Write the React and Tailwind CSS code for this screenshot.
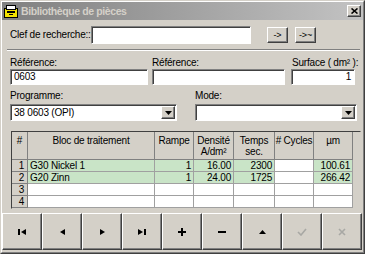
import React from 'react';

const font = "font-['Liberation_Sans',Arial,sans-serif] text-[10px] tracking-[-0.2px] leading-[12px] text-black whitespace-nowrap";
const raised = "border border-t-white border-l-white border-r-[#404040] border-b-[#404040] shadow-[inset_-1px_-1px_#808080]";
const sunken = "border border-t-[#808080] border-l-[#808080] border-r-white border-b-white shadow-[inset_1px_1px_#404040] bg-white";

function TextBox({ w, value, right, h = 'h-[16px]' }) {
  return (
    <div className={`${sunken} ${w} ${h} flex items-center px-[3px] ${right ? 'justify-end' : ''}`}>
      {value}
    </div>
  );
}

function Select({ w, value }) {
  return (
    <div className={`${sunken} ${w} h-[17px] flex items-center justify-between pl-[3px] pr-[1px]`}>
      <span>{value}</span>
      <div className={`${raised} bg-[#d4d0c8] w-[14px] h-[13px] flex items-center justify-center`}>
        <svg width="7" height="4" viewBox="0 0 7 4"><path d="M0 0h7L3.5 4z" fill="#000" /></svg>
      </div>
    </div>
  );
}

const cols = "grid grid-cols-[16px_127px_39px_40px_41px_39px_39px]";

const rows = [
  { n: '1', bloc: 'G30 Nickel 1', rampe: '1', dens: '16.00', temps: '2300', um: '100.61', on: true },
  { n: '2', bloc: 'G20 Zinn', rampe: '1', dens: '24.00', temps: '1725', um: '266.42', on: true },
  { n: '3' },
  { n: '4' },
];

function Cell({ children, green, right }) {
  return (
    <div className={`h-[12px] border-r border-b border-[#a0a0a0] px-[2px] flex items-center ${right ? 'justify-end' : ''} ${green ? 'bg-[#c9e4c7]' : 'bg-white'}`}>
      {children}
    </div>
  );
}

function NavIcon({ kind }) {
  const f = '#000';
  const g = '#a8a8a4';
  switch (kind) {
    case 'first':
      return <svg width="8" height="6" viewBox="0 0 8 6"><rect x="0" y="0" width="2" height="6" fill={f} /><path d="M8 0v6L3 3z" fill={f} /></svg>;
    case 'prev':
      return <svg width="5" height="6" viewBox="0 0 5 6"><path d="M5 0v6L0 3z" fill={f} /></svg>;
    case 'next':
      return <svg width="5" height="6" viewBox="0 0 5 6"><path d="M0 0v6l5-3z" fill={f} /></svg>;
    case 'last':
      return <svg width="8" height="6" viewBox="0 0 8 6"><path d="M0 0v6l5-3z" fill={f} /><rect x="6" y="0" width="2" height="6" fill={f} /></svg>;
    case 'add':
      return <svg width="8" height="8" viewBox="0 0 8 8"><rect x="3" y="0" width="2" height="8" fill={f} /><rect x="0" y="3" width="8" height="2" fill={f} /></svg>;
    case 'del':
      return <svg width="8" height="2" viewBox="0 0 8 2"><rect width="8" height="2" fill={f} /></svg>;
    case 'up':
      return <svg width="7" height="4" viewBox="0 0 7 4"><path d="M0 4h7L3.5 0z" fill={f} /></svg>;
    case 'ok':
      return <svg width="10" height="8" viewBox="0 0 10 8"><path d="M1 4l3 3 5-6" stroke={g} strokeWidth="1.6" fill="none" /></svg>;
    default:
      return <svg width="8" height="8" viewBox="0 0 8 8"><path d="M1 1l6 6M7 1L1 7" stroke={g} strokeWidth="1.6" fill="none" /></svg>;
  }
}

export default function App() {
  return (
    <div className={`${font} w-[365px] h-[254px] bg-[#d4d0c8] border border-t-[#d4d0c8] border-l-[#d4d0c8] border-r-[#404040] border-b-[#404040]`}>
      <div className="h-full border border-t-white border-l-white border-r-[#808080] border-b-[#808080] flex flex-col">
        {/* title bar */}
        <div className="h-[18px] bg-gradient-to-r from-[#808080] to-[#c3c3c3] flex items-center pl-[2px] pr-[2px]">
          <svg width="14" height="13" viewBox="0 0 14 13">
            <rect x="0.5" y="3.5" width="13" height="9" fill="#f4e400" stroke="#000" />
            <rect x="2.5" y="0.5" width="9" height="4" fill="#fff" stroke="#000" />
            <rect x="3" y="6" width="8" height="2" fill="#000" />
            <rect x="5" y="9" width="4" height="1" fill="#000" />
          </svg>
          <span className="ml-[3px] font-bold text-[#d4d0c8] text-[10.5px] tracking-[-0.4px]">Bibliothèque de pièces</span>
          <div className={`${raised} bg-[#d4d0c8] ml-auto w-[14px] h-[12px] flex items-center justify-center`}>
            <svg width="7" height="6" viewBox="0 0 7 6"><path d="M0.5 0.5l6 5M6.5 0.5l-6 5" stroke="#000" strokeWidth="1.6" /></svg>
          </div>
        </div>

        {/* search row */}
        <div className="flex items-center mt-[6px] pl-[8px]">
          <span className="w-[81px] shrink-0">Clef de recherche::</span>
          <TextBox w="w-[160px] shrink-0" h="h-[18px]" />
          <button className={`${raised} bg-[#d4d0c8] ml-[16px] w-[21px] h-[16px] flex items-center justify-center text-[9px]`}>-&gt;</button>
          <button className={`${raised} bg-[#d4d0c8] ml-[7px] w-[21px] h-[16px] flex items-center justify-center text-[9px]`}>-&gt;~</button>
        </div>

        {/* separator */}
        <div className="ml-[5px] w-[353px] mt-[5px] border-t border-t-[#808080] border-b border-b-white" />

        {/* reference row */}
        <div className="flex mt-[6px] pl-[8px]">
          <div className="flex flex-col w-[142px]">
            <span className="h-[12px]">Référence:</span>
            <TextBox w="w-[138px]" value="0603" />
          </div>
          <div className="flex flex-col w-[139px]">
            <span className="h-[12px]">Référence:</span>
            <TextBox w="w-[133px]" />
          </div>
          <div className="flex flex-col w-[64px]">
            <span className="h-[12px] pl-[1px]">Surface ( dm² ):</span>
            <TextBox w="w-[64px]" value="1" right />
          </div>
        </div>

        {/* programme row */}
        <div className="flex mt-[5px] pl-[8px]">
          <div className="flex flex-col w-[185px]">
            <span className="h-[14px]">Programme:</span>
            <Select w="w-[167px]" value="38 0603 (OPI)" />
          </div>
          <div className="flex flex-col">
            <span className="h-[14px]">Mode:</span>
            <Select w="w-[162px]" />
          </div>
        </div>

        {/* grid */}
        <div className="ml-[9px] mt-[10px] w-[350px] h-[78px] border border-[#404040] border-r-[#d4d0c8] border-b-[#d4d0c8] bg-[#d4d0c8]">
          <div className={cols}>
            {['#', 'Bloc de traitement', 'Rampe', 'Densité\nA/dm²', 'Temps\nsec.', '# Cycles', 'µm'].map((h, i) => (
              <div key={i} className="h-[28px] border-r border-b border-[#808080] pt-[3px] text-center whitespace-pre leading-[11px]">
                {h}
              </div>
            ))}
            {rows.map((r) => (
              <React.Fragment key={r.n}>
                <div className="h-[12px] border-r border-b border-[#808080] bg-[#d4d0c8] flex items-center justify-end pr-[3px]">{r.n}</div>
                <Cell green={r.on}>{r.bloc}</Cell>
                <Cell green={r.on} right>{r.rampe}</Cell>
                <Cell green={r.on} right>{r.dens}</Cell>
                <Cell green={r.on} right>{r.temps}</Cell>
                <Cell />
                <Cell green={r.on} right>{r.um}</Cell>
              </React.Fragment>
            ))}
          </div>
        </div>

        {/* nav buttons */}
        <div className="flex mt-[4px]">
          {['first', 'prev', 'next', 'last', 'add', 'del', 'up', 'ok', 'cancel'].map((k) => (
            <button key={k} className={`${raised} bg-[#d4d0c8] w-[40px] h-[37px] flex items-center justify-center`}>
              <NavIcon kind={k} />
            </button>
          ))}
        </div>
      </div>
    </div>
  );
}
